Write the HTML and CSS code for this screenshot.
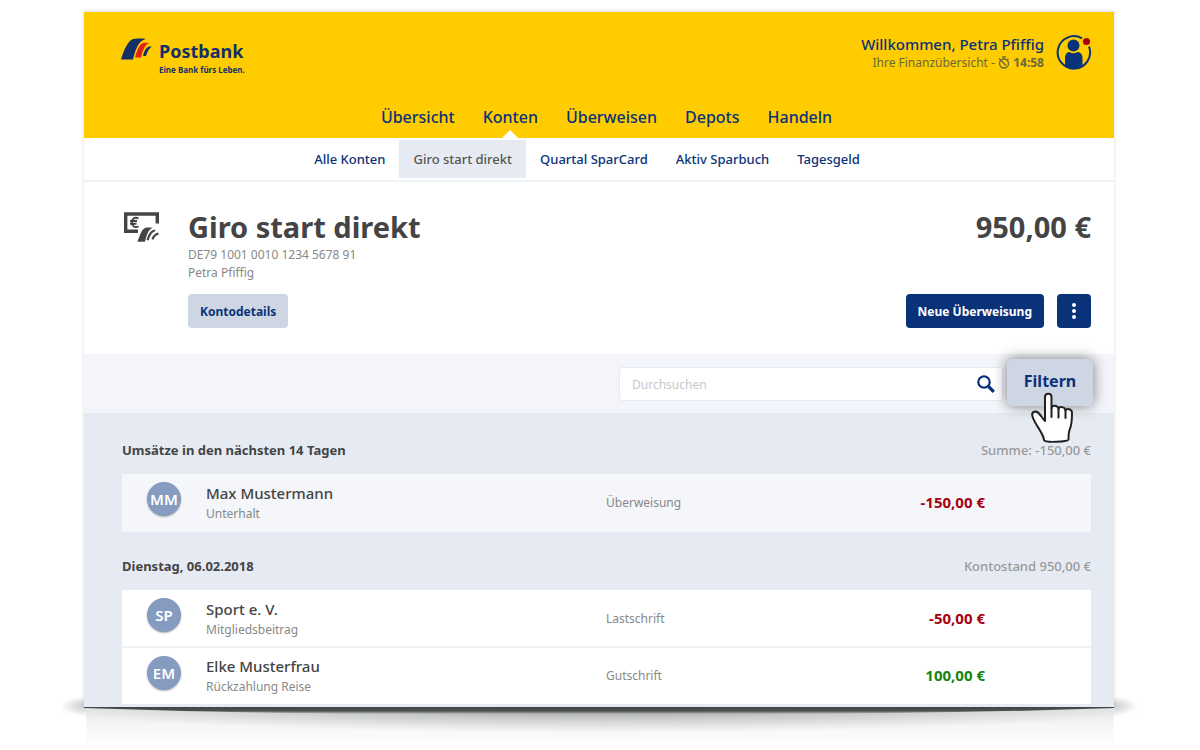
FILE: index.html
```html
<!DOCTYPE html>
<html lang="de">
<head>
<meta charset="utf-8">
<title>Postbank – Giro start direkt</title>
<meta name="viewport" content="width=device-width, initial-scale=1">
<link rel="stylesheet" href="styles.css">
</head>
<body>
<div class="stage">
  <div class="window">
    <header class="header">
      <div class="topbar">
        <a class="brand" href="#">
          <svg class="brand-mark" viewBox="0 0 31 22" aria-hidden="true">
            <path fill="#143068" d="M0 21.500C2.500 13 6 4.500 11 1.500C15 0 20 .6 25 .8C17 3 14.500 12 12 21.500Z"/>
            <path fill="#e2231a" d="M14 19.500C16 12.500 18 6.500 22 5C24 4.700 26 4.900 28 5.200C23.500 7 21.500 13 20 19.500Z"/>
            <path fill="#143068" d="M22 18C23 13.500 25 9.500 27.500 8.700C28.500 8.400 30 8.500 31 8.800C28 10 26.500 14 25 18Z"/>
          </svg>
          <span class="brand-text">
            <span class="brand-name">Postbank</span>
            <span class="brand-claim">Eine Bank fürs Leben.</span>
          </span>
        </a>
        <div class="user">
          <div class="user-text">
            <div class="welcome">Willkommen, Petra Pfiffig</div>
            <div class="session">Ihre Finanzübersicht -
              <svg class="timer" viewBox="0 0 12 13" aria-hidden="true" fill="none" stroke="currentColor" stroke-width="1.300"><circle cx="6" cy="7.500" r="4.500"/><path d="M4 .8h4M6 .8v2M9.300 3.800l1.200-1.200M1 2.500l7.200 7.300"/></svg>
              <b>14:58</b></div>
          </div>
          <svg class="avatar-icon" viewBox="0 0 36 36" aria-hidden="true">
            <defs><clipPath id="disc"><circle cx="18" cy="18.500" r="16.500"/></clipPath></defs>
            <path fill="none" stroke="#0a3278" stroke-width="2" d="M26 4.400A16.200 16.200 0 1 0 33 12.600"/>
            <g fill="#0a3278" clip-path="url(#disc)"><circle cx="17.500" cy="11.500" r="6"/><path d="M9 36V24.500Q9 18 13.500 18Q17.500 20.500 21.500 18Q26.500 18 26.500 24.500V36Z"/></g>
            <circle cx="30.500" cy="7.500" r="3.600" fill="#a8000f"/>
          </svg>
        </div>
      </div>
      <nav class="mainnav" aria-label="Hauptnavigation">
        <a href="#">Übersicht</a>
        <a class="active" href="#">Konten</a>
        <a href="#">Überweisen</a>
        <a href="#">Depots</a>
        <a href="#">Handeln</a>
      </nav>
    </header>
    <nav class="subnav" aria-label="Konten">
      <a href="#">Alle Konten</a>
      <a class="active" href="#">Giro start direkt</a>
      <a href="#">Quartal SparCard</a>
      <a href="#">Aktiv Sparbuch</a>
      <a href="#">Tagesgeld</a>
    </nav>

    <section class="account">
      <svg class="account-icon" viewBox="0 0 38 32" aria-hidden="true">
        <path fill="none" stroke="#444" stroke-width="3.400" d="M15 21.200H2.700V4H34.300V13.500"/>
        <path fill="none" stroke="#444" stroke-width="1.900" d="M15.500 8.400C11.500 6.700 8.900 8.800 8.900 12.300C8.900 16.300 11.500 18 15.500 16.400M7 11H14M7 13.700H13.500"/>
        <path fill="#444" d="M14.500 31.800C16.500 26 18.500 19.300 22 18C24.500 17.300 27 17.500 29.500 17.800C25 19.800 23.500 26 22 31.800Z"/>
        <path fill="none" stroke="#444" stroke-width="2.200" d="M24.500 30.300C26 25.300 27.500 21.300 32 20.300M29.500 29.300C30.500 26.300 32 24.300 35.500 23.500"/>
      </svg>
      <div class="account-main">
        <div class="account-title">
          <h1>Giro start direkt</h1>
          <span class="balance">950,00 €</span>
        </div>
        <p>DE79 1001 0010 1234 5678 91</p>
        <p>Petra Pfiffig</p>
        <div class="actions">
          <button class="btn btn-light" type="button">Kontodetails</button>
          <button class="btn btn-dark btn-push" type="button">Neue Überweisung</button>
          <button class="btn btn-dark btn-more" type="button" aria-label="Mehr">
            <svg viewBox="0 0 4 16" width="4" height="16" fill="#fff" aria-hidden="true"><circle cx="2" cy="2" r="2"/><circle cx="2" cy="8" r="2"/><circle cx="2" cy="14" r="2"/></svg>
          </button>
        </div>
      </div>
    </section>

    <form class="filterbar">
      <div class="search">
        <input type="text" placeholder="Durchsuchen" aria-label="Durchsuchen">
        <svg class="search-icon" viewBox="0 0 18 18" aria-hidden="true" fill="none" stroke="#0a3278"><circle cx="7" cy="7" r="5.700" stroke-width="2.200"/><path stroke-width="3.200" d="M11.500 11.500l5.300 5.300"/></svg>
      </div>
      <div class="filter">
        <button class="filter-btn" type="button">Filtern</button>
        <svg class="hand" viewBox="0 0 42 52" aria-hidden="true">
          <path fill="#fff" stroke="#222" stroke-width="2" stroke-linejoin="round" stroke-linecap="round" d="M14 29V5C14 .5 20.500 .5 20.500 5V16C21 12.500 27 13 27.500 17C28 14 34 14.500 34.500 18.500C36 16 41 17 41 21C41 28 41 33 38.500 38C37.500 41 37.500 46 37.500 47.500C37.500 50 13.500 51 13 48C12.500 41 4 33 1.500 24.500C0 19 5.500 18.500 8 21.500C10.500 24.500 12 27 14 29Z"/>
          <path fill="none" stroke="#222" stroke-width="2" stroke-linecap="round" d="M20.500 16V25M27.500 17V25.500M34.500 18.500V26"/>
        </svg>
      </div>
    </form>

    <main class="list">
      <div class="list-head"><h2>Umsätze in den nächsten 14 Tagen</h2><span>Summe: -150,00 €</span></div>
      <div class="card card-muted">
        <div class="entry">
          <span class="badge">MM</span>
          <div class="who"><strong>Max Mustermann</strong><span>Unterhalt</span></div>
          <span class="kind">Überweisung</span>
          <span class="amount minus">-150,00 €</span>
        </div>
      </div>
      <div class="list-head"><h2>Dienstag, 06.02.2018</h2><span>Kontostand 950,00 €</span></div>
      <div class="card">
        <div class="entry">
          <span class="badge">SP</span>
          <div class="who"><strong>Sport e. V.</strong><span>Mitgliedsbeitrag</span></div>
          <span class="kind">Lastschrift</span>
          <span class="amount minus">-50,00 €</span>
        </div>
        <div class="entry">
          <span class="badge">EM</span>
          <div class="who"><strong>Elke Musterfrau</strong><span>Rückzahlung Reise</span></div>
          <span class="kind">Gutschrift</span>
          <span class="amount plus">100,00 €</span>
        </div>
      </div>
    </main>
  </div>
  <svg class="floor" viewBox="0 0 1076 56" preserveAspectRatio="none" aria-hidden="true">
    <defs>
      <linearGradient id="fade" x1="0" y1="0" x2="0" y2="1"><stop offset="0" stop-color="#e4e6e8"/><stop offset=".45" stop-color="#f5f6f7"/><stop offset="1" stop-color="#fff"/></linearGradient>
      <radialGradient id="dark"><stop offset="0" stop-color="#333" stop-opacity=".42"/><stop offset=".5" stop-color="#444" stop-opacity=".2"/><stop offset="1" stop-color="#555" stop-opacity="0"/></radialGradient>
      <radialGradient id="wing"><stop offset="0" stop-color="#555" stop-opacity=".28"/><stop offset="1" stop-color="#555" stop-opacity="0"/></radialGradient>
      <linearGradient id="edge" x1="0" y1="0" x2="0" y2="1"><stop offset="0" stop-color="#444746"/><stop offset=".55" stop-color="#4b504e"/><stop offset="1" stop-color="#4b504e" stop-opacity="0"/></linearGradient>
    </defs>
    <ellipse cx="23" cy="14" rx="22" ry="10" fill="url(#wing)"/>
    <ellipse cx="1053" cy="14" rx="22" ry="10" fill="url(#wing)"/>
    <rect x="25" y="15" width="1028" height="40" fill="url(#fade)"/>
    <ellipse cx="538" cy="15" rx="560" ry="26" fill="url(#dark)"/>
    <path fill="url(#edge)" d="M23 15H1053V16Q880 22 700 22H376Q196 22 23 16Z"/>
  </svg>
</div>
</body>
</html>
```
FILE: styles.css
```css
* { box-sizing: border-box; }

body {
  margin: 0;
  background: #fff;
  color: #444;
  font-family: "Noto Sans", "Open Sans", sans-serif;
  font-size: 12px;
  line-height: 18px;
}

a { color: #0a3278; text-decoration: none; }
h1, h2, p { margin: 0; }
button, input { font-family: inherit; }

.stage { padding: 12px 86px 0 84px; overflow: hidden; }

.window {
  position: relative;
  z-index: 1;
  background: #fff;
  box-shadow: 0 -1px 3px rgba(0, 0, 0, .16);
}

.header {
  display: flex;
  flex-direction: column;
  justify-content: space-between;
  height: 126px;
  padding: 22px 22px 0 37px;
  background: #fc0;
}

.topbar { display: flex; justify-content: space-between; align-items: flex-start; }

.brand { display: flex; gap: 7px; padding-top: 4px; color: #143068; }
.brand-mark { width: 31px; height: 22px; }
.brand-text { display: flex; flex-direction: column; font-weight: 700; }
.brand-name { font-size: 18px; line-height: 26px; }
.brand-claim { font-size: 8px; line-height: 12px; }

.user { display: flex; gap: 12px; }
.user-text { text-align: right; color: #6b6840; }
.welcome { color: #0a3278; font-size: 15px; font-weight: 500; line-height: 20px; }
.session { font-size: 12px; line-height: 18px; }
.timer { width: 12px; height: 13px; vertical-align: -2px; }
.avatar-icon { width: 36px; height: 36px; }

.mainnav { display: flex; justify-content: center; gap: 28px; }
.mainnav a {
  position: relative;
  padding-bottom: 9px;
  font-size: 16px;
  font-weight: 500;
  line-height: 24px;
}
.mainnav .active::after {
  content: "";
  position: absolute;
  left: 50%;
  bottom: 0;
  margin-left: -8px;
  border: 8px solid transparent;
  border-top: 0;
  border-bottom-color: #fff;
}

.subnav {
  display: flex;
  justify-content: center;
  height: 44px;
  padding: 2px 62px 2px 38px;
  border-bottom: 2px solid #eff2f7;
}
.subnav a {
  padding: 0 14px;
  font-size: 13px;
  font-weight: 500;
  line-height: 39px;
}
.subnav .active { background: #e6ebf3; color: #555; }

.account { display: flex; gap: 27px; padding: 28px 23px 26px 39px; }
.account-icon { width: 38px; height: 32px; }
.account-main { flex: 1; color: #888; }
.account-title { display: flex; justify-content: space-between; padding-bottom: 2px; color: #444; }
h1, .balance { font-size: 29px; font-weight: 700; line-height: 34px; }
.actions { display: flex; gap: 13px; padding-top: 12px; }

.btn {
  height: 34px;
  padding: 0 12px;
  border: 0;
  border-radius: 4px;
  font-size: 12px;
  font-weight: 700;
}
.btn-light { background: #ced6e4; color: #0a3278; }
.btn-dark { background: #0a3278; color: #fff; }
.btn-push { margin-left: auto; }
.btn-more { display: flex; align-items: center; justify-content: center; width: 34px; }

.filterbar {
  display: flex;
  justify-content: flex-end;
  gap: 4px;
  padding: 5px 21px 7px 38px;
  background: #f3f5fa;
}
.search {
  position: relative;
  width: 384px;
  margin-top: 8px;
}
.search input {
  width: 100%;
  height: 34px;
  padding: 0 40px 0 12px;
  border: 1px solid #e6ebf3;
  border-radius: 3px;
  background: #fff;
  color: #444;
  font-size: 12px;
}
.search input::placeholder { color: #c8c8c8; opacity: 1; }
.search-icon { position: absolute; right: 8px; top: 8px; width: 18px; height: 18px; }

.filter { position: relative; }
.filter-btn {
  width: 86px;
  height: 47px;
  padding: 0 0 3px;
  border: 0;
  border-radius: 5px;
  background: #ced6e4;
  box-shadow: 0 0 14px rgba(0, 0, 0, .5);
  color: #0a3278;
  font-size: 16px;
  font-weight: 700;
}
.hand { position: absolute; left: 24px; top: 33px; width: 42px; height: 52px; }

.list { padding: 23px 23px 3px 38px; background: #e6ebf3; }
.list-head {
  display: flex;
  justify-content: space-between;
  padding-bottom: 10px;
  color: #999;
  font-size: 13px;
  font-weight: 500;
  line-height: 28px;
}
h2 { color: #444; font-size: 13px; font-weight: 700; line-height: 28px; }

.card { background: #fff; }
.card-muted { margin-bottom: 20px; background: #f4f6fa; }
.entry {
  display: grid;
  grid-template-columns: 59px minmax(0, 400px) minmax(0, 1fr) auto;
  align-items: center;
  height: 58px;
  padding: 0 106px 0 25px;
}
.entry + .entry { height: 56px; box-shadow: 0 -1px 0 1px #eff2f7; clip-path: inset(-2px 0 0 0); }
.badge {
  align-self: start;
  width: 34px;
  height: 34px;
  margin-top: 8px;
  border-radius: 50%;
  background: #869bc0;
  box-shadow: 0 1px 2px rgba(0, 0, 0, .3);
  color: #fff;
  font-size: 15px;
  font-weight: 600;
  line-height: 34px;
  text-align: center;
}
.who { display: flex; flex-direction: column; gap: 2px; color: #888; }
.who strong { color: #444; font-size: 15px; font-weight: 500; line-height: 20px; }
.kind { color: #888; }
.amount { padding-bottom: 2px; font-size: 15px; font-weight: 700; }
.minus { color: #a8000f; }
.plus { color: #15850f; }

.floor {
  display: block;
  width: calc(100% + 46px);
  height: 56px;
  margin: -15px -23px 0;
}
```
